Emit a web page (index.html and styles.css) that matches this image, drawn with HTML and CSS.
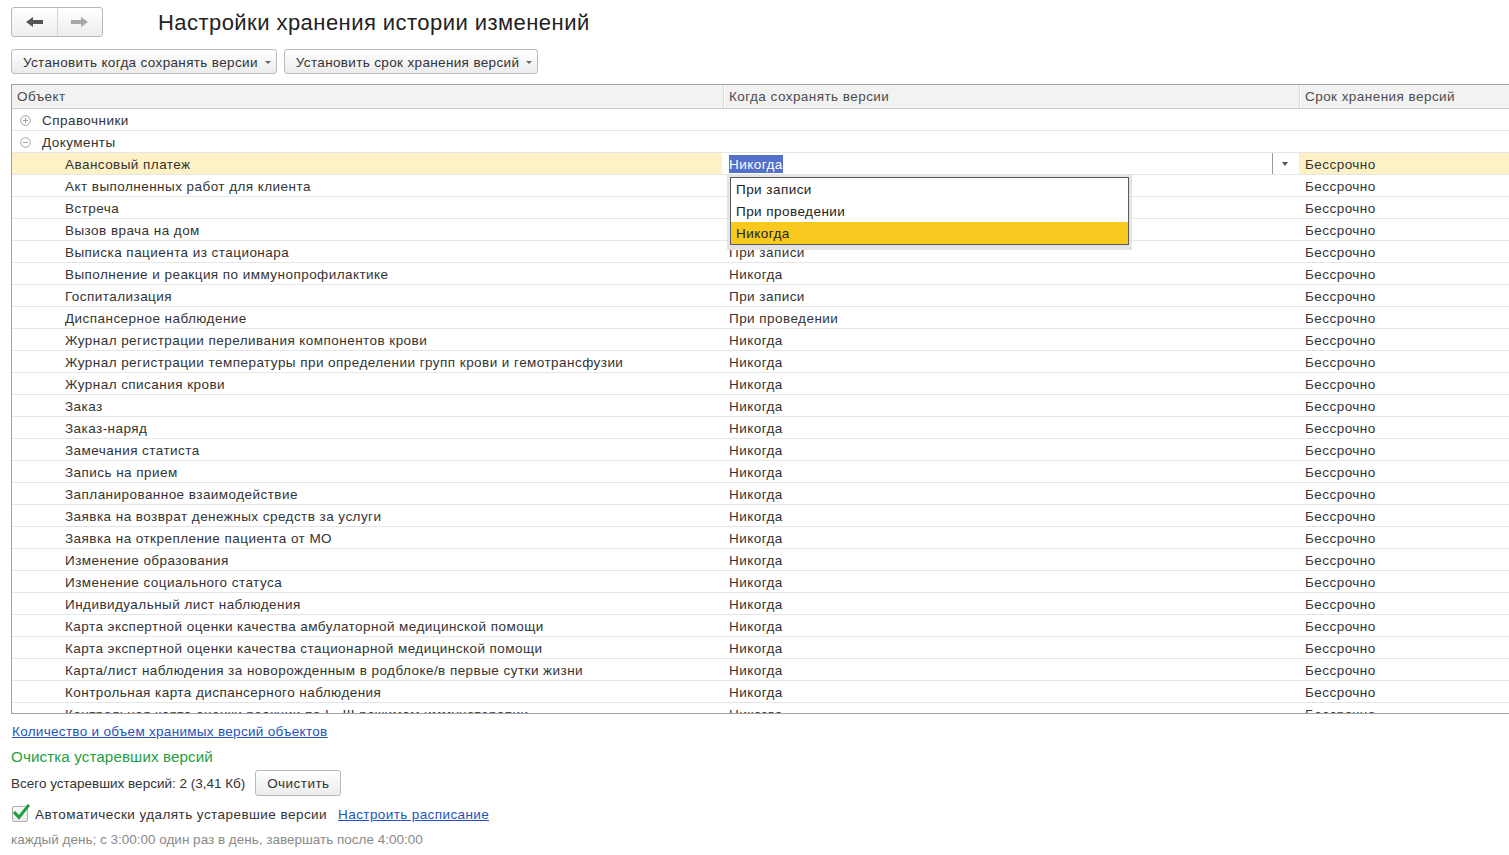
FILE: index.html
```html
<!DOCTYPE html>
<html lang="ru">
<head>
<meta charset="utf-8">
<title>Настройки хранения истории изменений</title>
<link rel="stylesheet" href="styles.css">
</head>
<body>
<div class="page">
  <header class="top">
    <div class="nav">
      <button class="nav-btn back" type="button">
        <svg width="17" height="10" viewBox="0 0 17 10"><path d="M0 5 L7 0 L7 3 L17 3 L17 7 L7 7 L7 10 Z"/></svg>
      </button>
      <button class="nav-btn fwd" type="button">
        <svg width="17" height="10" viewBox="0 0 17 10"><path d="M17 5 L10 0 L10 3 L0 3 L0 7 L10 7 L10 10 Z"/></svg>
      </button>
    </div>
    <h1 class="title">Настройки хранения истории изменений</h1>
  </header>

  <div class="toolbar">
    <button class="tb-btn" type="button">Установить когда сохранять версии<span class="caret"></span></button>
    <button class="tb-btn" type="button">Установить срок хранения версий<span class="caret"></span></button>
  </div>

  <div class="grid">
    <div class="grid-head">
      <div class="c c1">Объект</div>
      <div class="c c2">Когда сохранять версии</div>
      <div class="c c3">Срок хранения версий</div>
    </div>
    <div class="grid-body">
      <div class="row">
        <div class="c c1 lvl1"><svg class="tree" width="11" height="11" viewBox="0 0 11 11"><circle cx="5.5" cy="5.5" r="4.8"/><path d="M3 5.5 H8 M5.5 3 V8"/></svg>Справочники</div>
        <div class="c c2"></div><div class="c c3"></div>
      </div>
      <div class="row">
        <div class="c c1 lvl1"><svg class="tree" width="11" height="11" viewBox="0 0 11 11"><circle cx="5.5" cy="5.5" r="4.8"/><path d="M3 5.5 H8"/></svg>Документы</div>
        <div class="c c2"></div><div class="c c3"></div>
      </div>
      <div class="row sel">
        <div class="c c1 lvl2">Авансовый платеж</div>
        <div class="c c2 editor"><span class="edit-text"><span class="hl">Никогда</span></span><span class="edit-btn"><span class="dd"></span></span></div>
        <div class="c c3">Бессрочно</div>
      </div>
      <div class="row"><div class="c c1 lvl2">Акт выполненных работ для клиента</div><div class="c c2"></div><div class="c c3">Бессрочно</div></div>
      <div class="row"><div class="c c1 lvl2">Встреча</div><div class="c c2"></div><div class="c c3">Бессрочно</div></div>
      <div class="row"><div class="c c1 lvl2">Вызов врача на дом</div><div class="c c2"></div><div class="c c3">Бессрочно</div></div>
      <div class="row"><div class="c c1 lvl2">Выписка пациента из стационара</div><div class="c c2">При записи</div><div class="c c3">Бессрочно</div></div>
      <div class="row"><div class="c c1 lvl2">Выполнение и реакция по иммунопрофилактике</div><div class="c c2">Никогда</div><div class="c c3">Бессрочно</div></div>
      <div class="row"><div class="c c1 lvl2">Госпитализация</div><div class="c c2">При записи</div><div class="c c3">Бессрочно</div></div>
      <div class="row"><div class="c c1 lvl2">Диспансерное наблюдение</div><div class="c c2">При проведении</div><div class="c c3">Бессрочно</div></div>
      <div class="row"><div class="c c1 lvl2">Журнал регистрации переливания компонентов крови</div><div class="c c2">Никогда</div><div class="c c3">Бессрочно</div></div>
      <div class="row"><div class="c c1 lvl2">Журнал регистрации температуры при определении групп крови и гемотрансфузии</div><div class="c c2">Никогда</div><div class="c c3">Бессрочно</div></div>
      <div class="row"><div class="c c1 lvl2">Журнал списания крови</div><div class="c c2">Никогда</div><div class="c c3">Бессрочно</div></div>
      <div class="row"><div class="c c1 lvl2">Заказ</div><div class="c c2">Никогда</div><div class="c c3">Бессрочно</div></div>
      <div class="row"><div class="c c1 lvl2">Заказ-наряд</div><div class="c c2">Никогда</div><div class="c c3">Бессрочно</div></div>
      <div class="row"><div class="c c1 lvl2">Замечания статиста</div><div class="c c2">Никогда</div><div class="c c3">Бессрочно</div></div>
      <div class="row"><div class="c c1 lvl2">Запись на прием</div><div class="c c2">Никогда</div><div class="c c3">Бессрочно</div></div>
      <div class="row"><div class="c c1 lvl2">Запланированное взаимодействие</div><div class="c c2">Никогда</div><div class="c c3">Бессрочно</div></div>
      <div class="row"><div class="c c1 lvl2">Заявка на возврат денежных средств за услуги</div><div class="c c2">Никогда</div><div class="c c3">Бессрочно</div></div>
      <div class="row"><div class="c c1 lvl2">Заявка на открепление пациента от МО</div><div class="c c2">Никогда</div><div class="c c3">Бессрочно</div></div>
      <div class="row"><div class="c c1 lvl2">Изменение образования</div><div class="c c2">Никогда</div><div class="c c3">Бессрочно</div></div>
      <div class="row"><div class="c c1 lvl2">Изменение социального статуса</div><div class="c c2">Никогда</div><div class="c c3">Бессрочно</div></div>
      <div class="row"><div class="c c1 lvl2">Индивидуальный лист наблюдения</div><div class="c c2">Никогда</div><div class="c c3">Бессрочно</div></div>
      <div class="row"><div class="c c1 lvl2">Карта экспертной оценки качества амбулаторной медицинской помощи</div><div class="c c2">Никогда</div><div class="c c3">Бессрочно</div></div>
      <div class="row"><div class="c c1 lvl2">Карта экспертной оценки качества стационарной медицинской помощи</div><div class="c c2">Никогда</div><div class="c c3">Бессрочно</div></div>
      <div class="row"><div class="c c1 lvl2">Карта/лист наблюдения за новорожденным в родблоке/в первые сутки жизни</div><div class="c c2">Никогда</div><div class="c c3">Бессрочно</div></div>
      <div class="row"><div class="c c1 lvl2">Контрольная карта диспансерного наблюдения</div><div class="c c2">Никогда</div><div class="c c3">Бессрочно</div></div>
      <div class="row"><div class="c c1 lvl2">Контрольная карта оценки реакции по I - III режимам иммунотерапии</div><div class="c c2">Никогда</div><div class="c c3">Бессрочно</div></div>
    </div>
    <div class="popup">
      <div class="pop-item">При записи</div>
      <div class="pop-item">При проведении</div>
      <div class="pop-item active">Никогда</div>
    </div>
  </div>

  <a class="link link-block" href="#">Количество и объем хранимых версий объектов</a>
  <div class="section-title">Очистка устаревших версий</div>
  <div class="line clean-line">
    <span class="total">Всего устаревших версий: 2 (3,41 Кб)</span>
    <button class="btn" type="button">Очистить</button>
  </div>
  <div class="line check-line">
    <span class="checkbox"><svg width="20" height="18" viewBox="0 0 20 18"><path d="M4 9 L8 13.5 L17 2"/></svg></span>
    <span class="check-label">Автоматически удалять устаревшие версии</span>
    <a class="link" href="#">Настроить расписание</a>
  </div>
  <div class="note">каждый день; с 3:00:00 один раз в день, завершать после 4:00:00</div>
</div>
</body>
</html>
```

FILE: styles.css
```css
html, body {
  margin: 0;
  padding: 0;
  background: #ffffff;
  overflow: hidden;
}

body {
  font-family: "Liberation Sans", Arial, sans-serif;
  font-size: 13.5px;
  letter-spacing: 0.45px;
  color: #333333;
}

.page {
  padding-left: 11px;
}

/* Header */
.top {
  display: flex;
  align-items: center;
  height: 30px;
  margin-top: 7px;
}

.nav {
  display: flex;
  width: 92px;
  height: 30px;
  box-sizing: border-box;
  border: 1px solid #b8b8b8;
  border-radius: 3px;
  background: linear-gradient(#ffffff, #eeeeee);
  overflow: hidden;
}

.nav-btn {
  flex: 1;
  margin: 0;
  padding: 0;
  border: none;
  background: transparent;
  display: flex;
  align-items: center;
  justify-content: center;
}

.nav-btn + .nav-btn {
  border-left: 1px solid #d6d6d6;
}

.nav-btn.back svg { fill: #555555; }
.nav-btn.fwd svg { fill: #a8a8a8; }

.title {
  margin: 2px 0 0 55px;
  font-size: 22px;
  letter-spacing: 0.45px;
  font-weight: normal;
  color: #222222;
  line-height: 30px;
}

/* Toolbar */
.toolbar {
  display: flex;
  gap: 7px;
  margin-top: 12px;
  height: 25px;
}

.tb-btn {
  height: 25px;
  box-sizing: border-box;
  border: 1px solid #bcbcbc;
  border-radius: 3px;
  background: linear-gradient(#ffffff, #ececec);
  font-family: inherit;
  font-size: 13.5px;
  letter-spacing: 0.35px;
  color: #333333;
  padding: 1px 5px 0 11px;
  display: flex;
  align-items: center;
}

.caret {
  display: inline-block;
  width: 0;
  height: 0;
  margin-left: 7px;
  margin-top: 1px;
  border-left: 3px solid transparent;
  border-right: 3px solid transparent;
  border-top: 3px solid #666666;
}

/* Grid */
.grid {
  position: relative;
  margin-top: 10px;
  height: 630px;
  box-sizing: border-box;
  border-top: 1px solid #a2a2a2;
  border-left: 1px solid #a2a2a2;
  border-bottom: 1px solid #a2a2a2;
  overflow: hidden;
}

.grid-head {
  display: flex;
  height: 23px;
  border-bottom: 1px solid #cccccc;
  background: #f2f2f2;
  color: #4d4d4d;
}

.grid-head .c {
  line-height: 24px;
}

.grid-head .c2,
.grid-head .c3 {
  border-left: 1px solid #d9d9d9;
  box-shadow: inset 1px 0 0 #ffffff;
  padding-left: 5px;
}

.c {
  box-sizing: border-box;
  white-space: nowrap;
  overflow: hidden;
  padding-left: 5px;
}

.c1 { width: 711px; flex: none; }
.c2 { width: 576px; flex: none; padding-left: 6px; }
.c3 { flex: 1; padding-left: 6px; }

.row {
  display: flex;
  height: 21px;
  line-height: 23px;
  border-bottom: 1px solid #e6e6e6;
}

.lvl1 {
  display: flex;
  align-items: flex-start;
  padding-left: 8px;
}

.tree {
  margin-right: 11px;
  margin-top: 6px;
  flex: none;
  fill: none;
  stroke: #a0a0a0;
  stroke-width: 1;
}

.lvl2 {
  padding-left: 53px;
}

.row.sel .c1,
.row.sel .c3 {
  background: #fdf1c6;
}

.row.sel .c1 {
  border-right: 1px solid #ffffff;
}

.editor {
  display: flex;
  padding-left: 6px;
  padding-right: 0;
}

.edit-text {
  flex: 1;
}

.hl {
  background: #5470c8;
  color: #ffffff;
  padding: 2px 0 1px;
}

.edit-btn {
  width: 25px;
  flex: none;
  border-left: 1px solid #9a9a9a;
  display: flex;
  align-items: center;
  justify-content: center;
  margin-right: 1px;
}

.dd {
  width: 0;
  height: 0;
  border-left: 3px solid transparent;
  border-right: 3px solid transparent;
  border-top: 4px solid #555555;
  margin-left: -2px;
}

/* Popup */
.popup {
  position: absolute;
  left: 718px;
  top: 92px;
  width: 399px;
  box-sizing: border-box;
  border: 1px solid #5a5a5a;
  background: #ffffff;
  box-shadow: 0 0 0 3px #e4e4e4, 0 2px 0 3px #e4e4e4;
}

.pop-item {
  height: 22px;
  line-height: 23px;
  padding-left: 5px;
  color: #222222;
}

.pop-item.active {
  background: #f9c920;
}

/* Bottom */
.link {
  color: #2353b9;
  text-decoration: underline;
}

.link-block {
  display: block;
  margin-top: 8px;
  height: 18px;
  line-height: 19px;
  width: max-content;
  margin-left: 1px;
  letter-spacing: 0.3px;
}

.section-title {
  margin-top: 7px;
  height: 20px;
  line-height: 20px;
  font-size: 15.2px;
  letter-spacing: 0.1px;
  color: #1fa045;
}

.line {
  display: flex;
  align-items: center;
}

.clean-line {
  margin-top: 3px;
  height: 26px;
  gap: 10px;
}

.total {
  letter-spacing: 0;
}

.btn {
  width: 86px;
  height: 26px;
  box-sizing: border-box;
  border: 1px solid #b8b8b8;
  border-radius: 3px;
  background: linear-gradient(#ffffff, #ececec);
  font-family: inherit;
  font-size: 13.5px;
  letter-spacing: 0.45px;
  color: #333333;
  padding: 0;
}

.check-line {
  margin-top: 9px;
  height: 18px;
}

.checkbox {
  position: relative;
  width: 16px;
  height: 16px;
  box-sizing: border-box;
  border: 1px solid #b0b0b0;
  border-radius: 2px;
  background: linear-gradient(#fafafa, #ebebeb);
  margin-left: 1px;
}

.checkbox svg {
  position: absolute;
  left: -2px;
  top: -3px;
  fill: none;
  stroke: #1e9e3c;
  stroke-width: 3;
  stroke-linecap: square;
}

.check-label {
  margin-left: 7px;
}

.check-line .link {
  margin-left: 11px;
  letter-spacing: 0.4px;
}

.note {
  margin-top: 9px;
  height: 16px;
  line-height: 16px;
  color: #8a8a8a;
  letter-spacing: 0;
}
```
